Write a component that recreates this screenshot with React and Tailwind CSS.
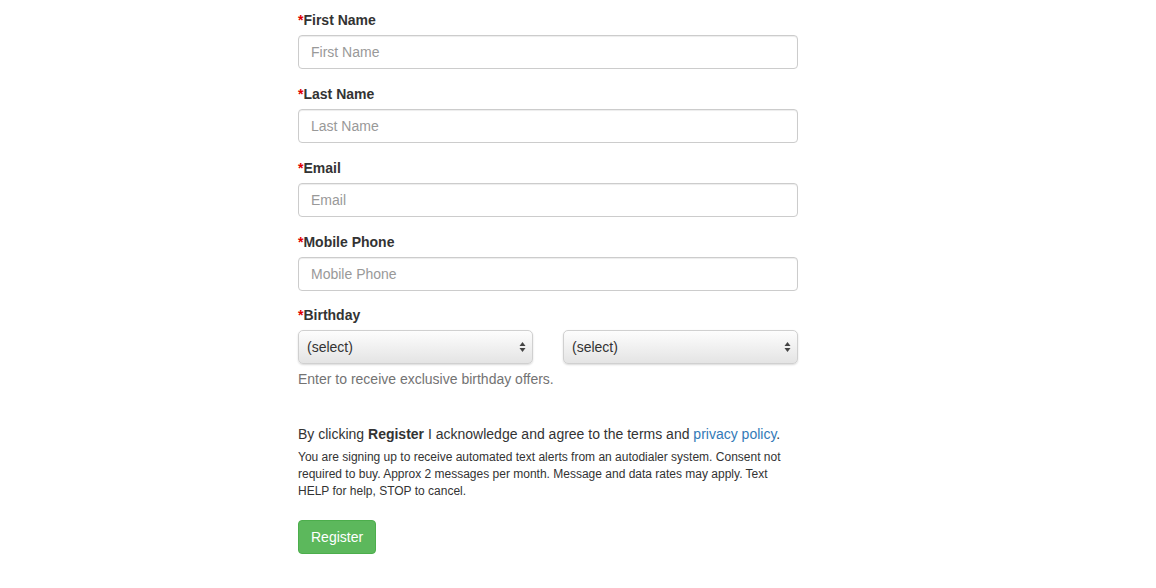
import React from 'react';

const fields = ['First Name', 'Last Name', 'Email', 'Mobile Phone'];

const Label = ({ children }) => (
  <label className="block h-5 mb-[5px] text-[14px] leading-5 font-bold text-[#333]">
    <span className="text-[#e00000] font-bold">*</span>
    {children}
  </label>
);

const SelectBox = () => (
  <div className="relative w-[235px] h-[34px]">
    <select
      className="appearance-none w-full h-full rounded-[5px] border border-[#d0d0d0] pl-[8px] text-[14px] text-[#333] outline-none shadow-[0_1px_2px_rgba(0,0,0,0.15)] bg-[linear-gradient(to_bottom,#fdfdfd,#e4e4e4)]"
      style={{ fontFamily: '"Liberation Sans", Arial, sans-serif' }}
      defaultValue=""
    >
      <option value="">(select)</option>
    </select>
    <svg
      className="absolute right-[7px] top-[11px] pointer-events-none"
      width="7"
      height="12"
      viewBox="0 0 7 12"
    >
      <path d="M3.5 1 L6.5 5 L0.5 5 Z" fill="#444" />
      <path d="M3.5 11 L6.5 7 L0.5 7 Z" fill="#444" />
    </svg>
  </div>
);

export default function App() {
  return (
    <div
      className="w-[1156px] h-[588px] bg-white text-[#333] overflow-hidden"
      style={{ fontFamily: '"Liberation Sans", Arial, Helvetica, sans-serif' }}
    >
      <form className="ml-[298px] w-[500px] pt-[10px]" onSubmit={(e) => e.preventDefault()}>
        {fields.map((f) => (
          <div key={f} className="mb-[15px]">
            <Label>{f}</Label>
            <input
              type="text"
              placeholder={f}
              className="block w-full h-[34px] px-[12px] rounded-[4px] border border-[#ccc] text-[14px] text-[#555] placeholder:text-[#999] outline-none shadow-[inset_0_1px_1px_rgba(0,0,0,0.075)]"
            />
          </div>
        ))}

        <div className="-mt-[1px]">
          <Label>Birthday</Label>
          <div className="flex gap-[30px]">
            <SelectBox />
            <SelectBox />
          </div>
          <p className="mt-[5px] text-[14px] leading-5 text-[#737373]">
            Enter to receive exclusive birthday offers.
          </p>
        </div>

        <p className="mt-[35px] text-[14px] leading-5 text-[#333]">
          By clicking <b>Register</b> I acknowledge and agree to the terms and{' '}
          <a href="#" className="text-[#337ab7]">privacy policy</a>.
        </p>
        <p className="mt-[5px] text-[12px] leading-[17px] text-[#333]">
          You are signing up to receive automated text alerts from an autodialer system. Consent not
          required to buy. Approx 2 messages per month. Message and data rates may apply. Text
          HELP for help, STOP to cancel.
        </p>

        <button
          type="submit"
          className="mt-[20px] h-[34px] px-[12px] rounded-[4px] border border-[#4cae4c] bg-[#5cb85c] text-white text-[14px]"
        >
          Register
        </button>
      </form>
    </div>
  );
}
